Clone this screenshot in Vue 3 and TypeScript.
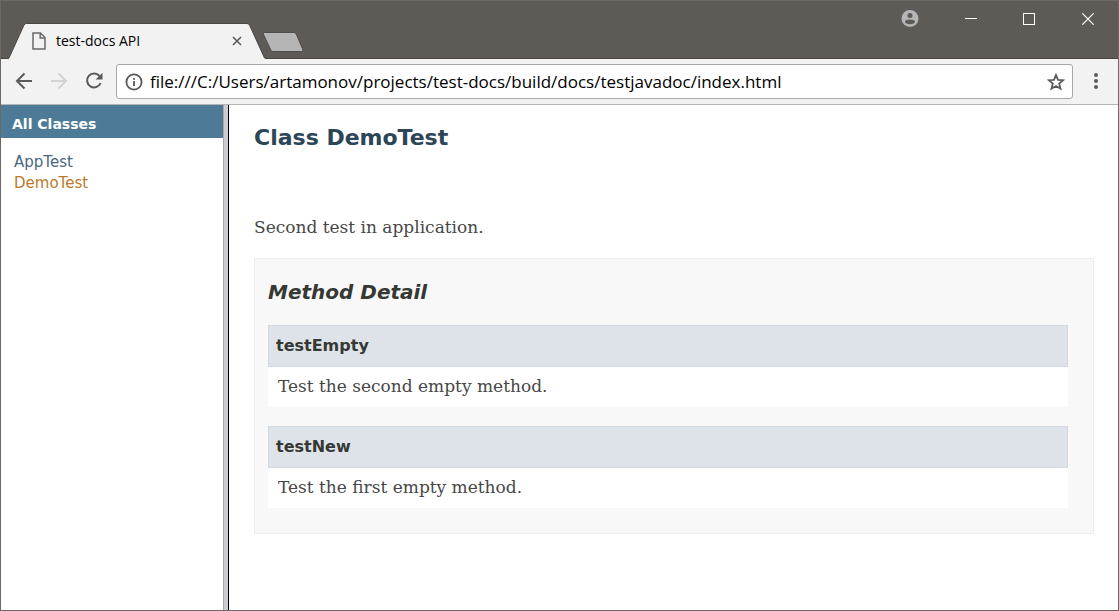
<script setup lang="ts">
import { ref } from 'vue'

interface ClassLink {
  name: string
  current: boolean
}

interface MethodDoc {
  name: string
  description: string
}

const address = ref('file:///C:/Users/artamonov/projects/test-docs/build/docs/testjavadoc/index.html')

const classes: ClassLink[] = [
  { name: 'AppTest', current: false },
  { name: 'DemoTest', current: true },
]

const methods: MethodDoc[] = [
  { name: 'testEmpty', description: 'Test the second empty method.' },
  { name: 'testNew', description: 'Test the first empty method.' },
]
</script>

<template>
  <div class="window">
    <header class="titlebar">
      <div class="tab">
        <svg class="tab-shape" width="258" height="36" viewBox="0 0 258 36" aria-hidden="true">
          <path d="M0 36 L1 35 L16 2 Q17 .5 18.500 .5 L239 .5 Q240.500 .5 241.500 2 L256.500 35 L258 36 Z" fill="#f2f2f2" />
          <path d="M0 35.500 L1 35 L16 2 Q17 .5 18.500 .5 L239 .5 Q240.500 .5 241.500 2 L256.500 35 L258 35.500" fill="none" stroke="#4a4643" />
        </svg>
        <svg class="tab-file" width="14" height="18" viewBox="0 0 14 18" aria-hidden="true">
          <path d="M1 1 H8.500 L13 5.500 V17 H1 Z M8.200 1 V6 H13" fill="none" stroke="#6a6a6a" stroke-width="1.500" />
        </svg>
        <span class="tab-title">test-docs API</span>
        <button class="icon-button tab-close" type="button" aria-label="Close tab">
          <svg width="10" height="10" viewBox="0 0 10 10"><path d="M1 1 L9 9 M9 1 L1 9" stroke="#5a5a5a" stroke-width="1.600" /></svg>
        </button>
      </div>
      <button class="icon-button new-tab" type="button" aria-label="New tab">
        <svg width="42" height="20" viewBox="0 0 42 20">
          <path d="M2.500 .5 H32 Q33.500 .5 34.200 2 L41 18 Q41.500 19.500 40 19.500 H11 Q9.500 19.500 8.800 18 L1.300 2 Q.8 .5 2.500 .5 Z" fill="#b5b5b5" stroke="#504c49" />
        </svg>
      </button>
      <div class="window-controls">
        <button class="icon-button" type="button" aria-label="Profile">
          <svg width="18" height="18" viewBox="0 0 18 18">
            <circle cx="9" cy="8.500" r="8.500" fill="#b5b5b5" />
            <circle cx="9" cy="5.400" r="2.500" fill="#5e5a56" />
            <path d="M4 12 C4 8.800 14 8.800 14 12 C12.800 15 5.200 15 4 12 Z" fill="#5e5a56" />
          </svg>
        </button>
        <button class="icon-button" type="button" aria-label="Minimize">
          <svg width="12" height="12" viewBox="0 0 12 12"><path d="M0 5.500 H12" stroke="#fff" /></svg>
        </button>
        <button class="icon-button" type="button" aria-label="Maximize">
          <svg width="12" height="12" viewBox="0 0 12 12"><rect x=".5" y=".5" width="11" height="11" fill="none" stroke="#fff" /></svg>
        </button>
        <button class="icon-button" type="button" aria-label="Close">
          <svg width="13" height="12" viewBox="0 0 13 12"><path d="M1.300 .3 L12.700 11.700 M12.700 .3 L1.300 11.700" stroke="#fff" stroke-width="1.200" /></svg>
        </button>
      </div>
    </header>

    <nav class="toolbar" aria-label="Browser">
      <button class="icon-button" type="button" aria-label="Back">
        <svg width="18" height="18" viewBox="0 0 18 18"><path d="M17 9 H2 M9.500 1.500 L2 9 L9.500 16.500" fill="none" stroke="#5a5a5a" stroke-width="2" /></svg>
      </button>
      <button class="icon-button" type="button" aria-label="Forward" disabled>
        <svg width="18" height="18" viewBox="0 0 18 18"><path d="M1 9 H16 M8.500 1.500 L16 9 L8.500 16.500" fill="none" stroke="#d3d3d3" stroke-width="2" /></svg>
      </button>
      <button class="icon-button" type="button" aria-label="Reload">
        <svg width="18" height="18" viewBox="0 0 18 18">
          <path d="M14.500 4 A7 7 0 1 0 15.600 11" fill="none" stroke="#5a5a5a" stroke-width="2" />
          <path d="M17.500 .8 V7.600 H10.600 Z" fill="#5a5a5a" />
        </svg>
      </button>
      <div class="address-bar">
        <svg width="18" height="18" viewBox="0 0 18 18" aria-hidden="true">
          <circle cx="9" cy="9" r="7.600" fill="none" stroke="#5a5a5a" stroke-width="1.800" />
          <path d="M9 8 V13 M9 5 V6.800" stroke="#5a5a5a" stroke-width="1.800" />
        </svg>
        <input v-model="address" class="address" type="text" aria-label="Address" spellcheck="false" />
        <button class="icon-button" type="button" aria-label="Bookmark this page">
          <svg width="18" height="18" viewBox="0 0 18 18">
            <path d="M9 2 L11 6.800 L16.200 7.200 L12.200 10.600 L13.500 15.700 L9 13 L4.500 15.700 L5.800 10.600 L1.800 7.200 L7 6.800 Z" fill="none" stroke="#5a5a5a" stroke-width="1.800" />
          </svg>
        </button>
      </div>
      <button class="icon-button" type="button" aria-label="Menu">
        <svg width="4" height="16" viewBox="0 0 4 16" fill="#5a5a5a">
          <circle cx="2" cy="2" r="2" /><circle cx="2" cy="8" r="2" /><circle cx="2" cy="14" r="2" />
        </svg>
      </button>
    </nav>

    <div class="page">
      <aside class="sidebar">
        <h1 class="bar">All Classes</h1>
        <ul class="class-list">
          <li v-for="item in classes" :key="item.name">
            <a href="#" :class="{ current: item.current }">{{ item.name }}</a>
          </li>
        </ul>
      </aside>
      <div class="splitter"></div>
      <main class="content">
        <h2 class="class-title">Class DemoTest</h2>
        <p class="summary">Second test in application.</p>
        <section class="details">
          <h3 class="details-title">Method Detail</h3>
          <article v-for="method in methods" :key="method.name" class="method">
            <h4 class="method-name">{{ method.name }}</h4>
            <p class="method-text">{{ method.description }}</p>
          </article>
        </section>
      </main>
    </div>
  </div>
</template>

<style>
body {
  margin: 0;
}
</style>

<style scoped>
.window {
  box-sizing: border-box;
  display: flex;
  flex-direction: column;
  min-height: 100vh;
  border: 1px solid #6b6866;
  background: #fff;
}

h1,
h2,
h3,
h4,
p,
ul {
  margin: 0;
  padding: 0;
}

.icon-button {
  display: flex;
  flex: none;
  padding: 0;
  border: 0;
  background: none;
}

.titlebar {
  display: flex;
  align-items: flex-end;
  height: 58px;
  box-shadow: inset 0 -1px #4a4643;
  background: #5e5a56;
}

.tab {
  position: relative;
  display: flex;
  box-sizing: border-box;
  align-items: center;
  width: 258px;
  height: 36px;
  margin-left: 7px;
  padding: 0 24px;
}

.tab-shape {
  position: absolute;
  inset: 0;
}

.tab-file,
.tab-title,
.tab-close {
  position: relative;
}

.tab-title {
  flex: 1;
  margin-left: 10px;
  color: #000;
  font: 14px/20px "Open Sans", "Noto Sans", sans-serif;
}

.new-tab {
  margin: 0 0 7px -4px;
}

.window-controls {
  display: flex;
  align-items: center;
  align-self: flex-start;
  gap: 46px;
  height: 36px;
  margin-left: auto;
  padding-right: 24px;
}

.toolbar {
  display: flex;
  box-sizing: border-box;
  align-items: center;
  gap: 17px;
  height: 46px;
  padding: 0 20px 0 14px;
  border-bottom: 1px solid #b4b4b4;
  background: #f2f2f2;
}

.toolbar > .icon-button {
  padding-bottom: 1px;
}

.address-bar {
  display: flex;
  box-sizing: border-box;
  flex: 1;
  align-items: center;
  height: 35px;
  margin: 0 4px 0 -4px;
  padding: 0 7px 0 8px;
  border: 1px solid #a8a8a8;
  border-radius: 3px;
  background: #fff;
}

.address {
  flex: 1;
  min-width: 0;
  margin: 0 7px;
  padding: 0;
  border: 0;
  outline: 0;
  background: none;
  color: #000;
  font: 17px/24px "Open Sans", "Noto Sans", sans-serif;
}

.page {
  display: flex;
  flex: 1;
}

.sidebar {
  flex: 0 0 222px;
  font-family: "DejaVu Sans", sans-serif;
}

.bar {
  padding: 9px 11px 4px;
  background: #4d7a97;
  color: #fff;
  font-size: 14px;
  line-height: 20px;
}

.class-list {
  padding: 14px 13px;
  list-style: none;
  font-size: 15px;
  line-height: 21px;
}

.class-list a {
  color: #4a6782;
  text-decoration: none;
}

.class-list a.current {
  color: #bb7a2a;
}

.splitter {
  box-sizing: border-box;
  flex: 0 0 6px;
  border-right: 1px solid #000;
  border-left: 1px solid #a8a8a8;
  background: #cbcdd0;
}

.content {
  flex: 1;
  padding: 17px 24px 24px 25px;
  color: #474747;
  font: 17px/24px "DejaVu Serif", serif;
}

.class-title {
  color: #2c4557;
  font: bold 22px/32px "DejaVu Sans", sans-serif;
}

.summary {
  margin-top: 61px;
}

.details {
  margin-top: 19px;
  padding: 19px 25px 25px 13px;
  border: 1px solid #ededed;
  background: #f8f8f8;
}

.details-title {
  color: #353833;
  font: italic bold 20px/28px "DejaVu Sans", sans-serif;
}

.method {
  margin-top: 19px;
  background: #fff;
}

.method-name {
  padding: 8px 7px;
  border: 1px solid #d0d9e0;
  background: #dee3e9;
  color: #353833;
  font: bold 16px/24px "DejaVu Sans", sans-serif;
}

.method-text {
  padding: 7px 10px 9px;
}
</style>
